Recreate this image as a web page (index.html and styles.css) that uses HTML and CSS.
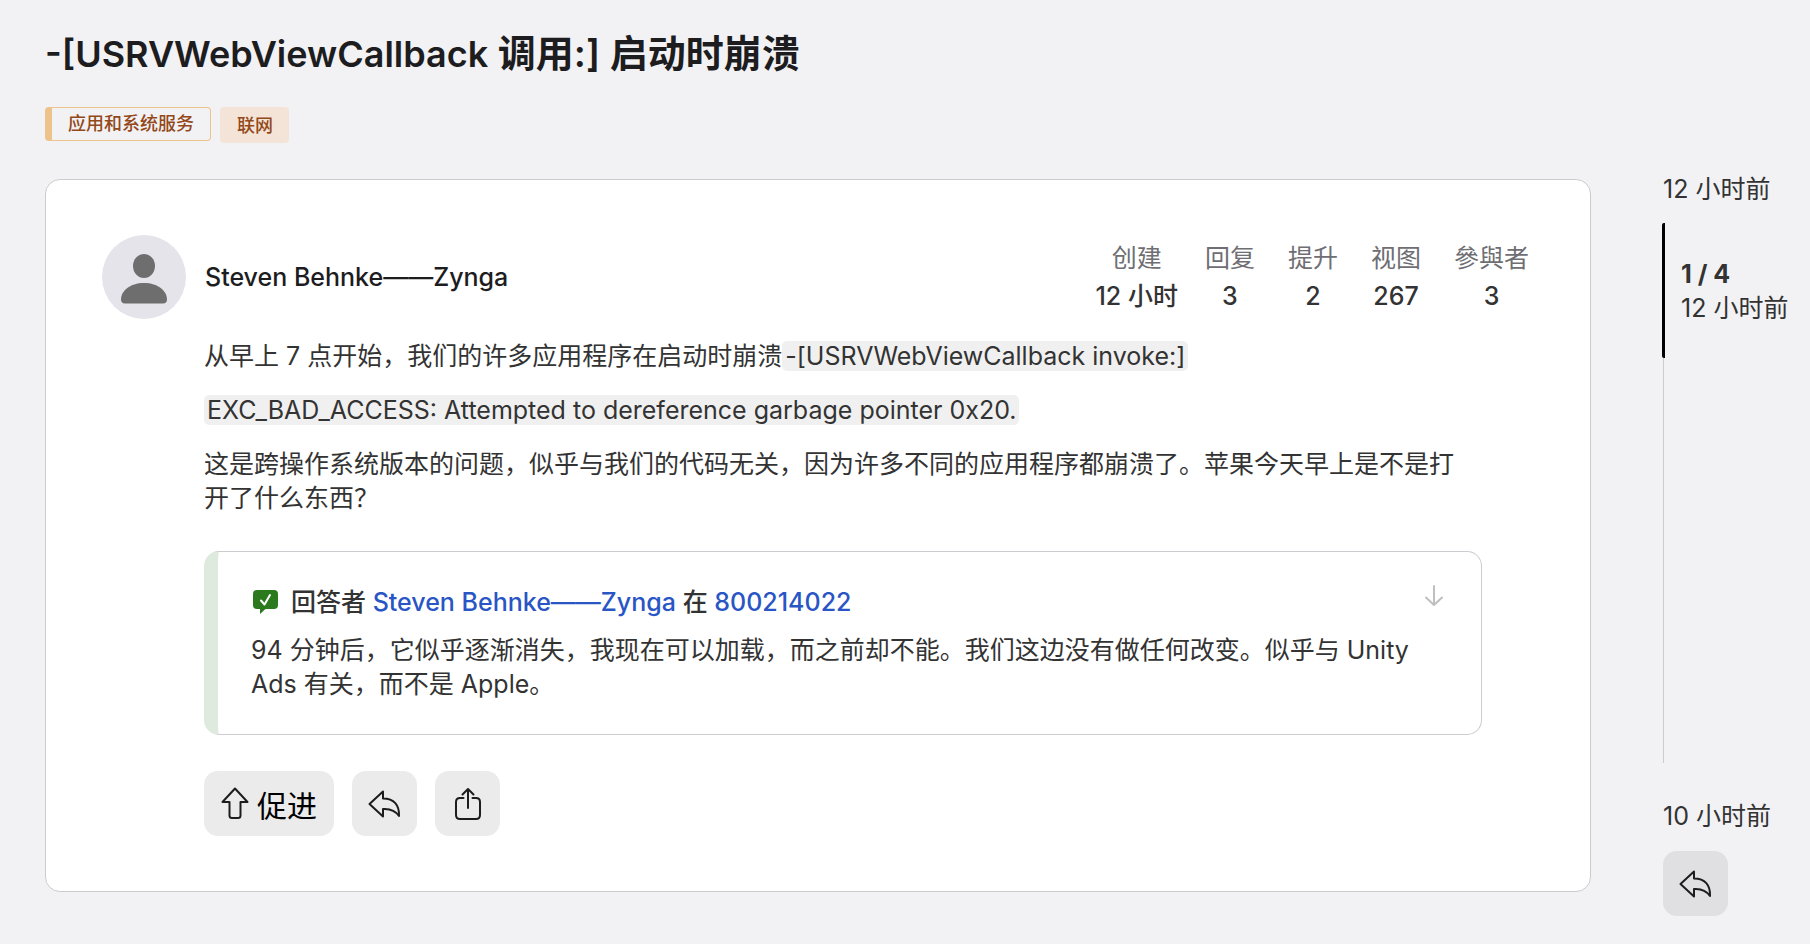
FILE: index.html
```html
<!DOCTYPE html>
<html lang="zh-CN">
<head>
    <meta charset="UTF-8">
    <meta name="viewport" content="width=device-width, initial-scale=1.0">
    <title>-[USRVWebViewCallback 调用:] 启动时崩溃</title>
    <link rel="stylesheet" href="styles.css">
</head>
<body>
    <header class="header">
        <h1 class="title"><span class="title-symbol">-[USRVWebViewCallback</span> 调用:] 启动时崩溃</h1>
        <div class="tags">
            <a href="#" class="tag tag-topic">应用和系统服务</a>
            <a href="#" class="tag tag-sub">联网</a>
        </div>
    </header>

    <div class="container">
        <main class="post">
            <div class="post-header">
                <svg class="avatar" viewBox="0 0 84 84" aria-hidden="true">
                    <circle cx="42" cy="42" r="42" fill="#e5e4ea"/>
                    <ellipse cx="42" cy="31" rx="11" ry="12" fill="#6e6e6e"/>
                    <path d="M23 68.500C20.500 68.500 19 67 19 64.500C19 56 28 48 42 48S65 56 65 64.500C65 67 63.500 68.500 61 68.500Z" fill="#6e6e6e"/>
                </svg>
                <span class="author">Steven Behnke——Zynga</span>
                <dl class="stats">
                    <div class="stat"><dt>创建</dt><dd>12 小时</dd></div>
                    <div class="stat"><dt>回复</dt><dd>3</dd></div>
                    <div class="stat"><dt>提升</dt><dd>2</dd></div>
                    <div class="stat"><dt>视图</dt><dd>267</dd></div>
                    <div class="stat"><dt>參與者</dt><dd>3</dd></div>
                </dl>
            </div>

            <div class="post-body">
                <p>从早上 7 点开始，我们的许多应用程序在启动时崩溃<code>-[USRVWebViewCallback invoke:]</code></p>
                <p><code>EXC_BAD_ACCESS: Attempted to dereference garbage pointer 0x20.</code></p>
                <p>这是跨操作系统版本的问题，似乎与我们的代码无关，因为许多不同的应用程序都崩溃了。苹果今天早上是不是打开了什么东西？</p>

                <section class="answer">
                    <div class="answer-header">
                        <svg class="answer-icon" viewBox="0 0 26 26" aria-hidden="true">
                            <path d="M4 1H21Q25 1 25 5V16Q25 20 21 20H12.500L7 25V20H4Q0 20 0 16V5Q0 1 4 1Z" fill="#2b7a1e"/>
                            <path d="M8 11.500L11.500 15.500L17 6" fill="none" stroke="#fff" stroke-width="2" stroke-linecap="round" stroke-linejoin="round"/>
                        </svg>
                        <span class="answer-by">回答者 <a href="#">Steven Behnke——Zynga</a> 在 <a href="#">800214022</a></span>
                        <a href="#" class="jump" aria-label="跳到回答">
                            <svg width="20" height="24" viewBox="0 0 20 24" fill="none" stroke="#bfbfbf" stroke-width="2" stroke-linecap="round" stroke-linejoin="round">
                                <path d="M10 1V20M2 12.500L10 20L18 12.500"/>
                            </svg>
                        </a>
                    </div>
                    <p class="answer-text">94 分钟后，它似乎逐渐消失，我现在可以加载，而之前却不能。我们这边没有做任何改变。似乎与 Unity Ads 有关，而不是 Apple。</p>
                </section>

                <div class="actions">
                    <button class="btn btn-boost">
                        <svg width="28" height="33" viewBox="0 0 28 33" fill="none" stroke="#1d1d1f" stroke-width="2" stroke-linejoin="round">
                            <path d="M14 1.500L26.500 15H19.500V28.500Q19.500 31 17 31H11Q8.500 31 8.500 28.500V15H1.500Z"/>
                        </svg>
                        促进
                    </button>
                    <button class="btn" aria-label="回复">
                        <svg width="33" height="28" viewBox="0 0 33 28" fill="none" stroke="#1d1d1f" stroke-width="2" stroke-linejoin="round">
                            <path d="M15 1.500L1.500 14L15 26.500V19C22 18.500 27 20 31 26C31.500 15 26 8.500 15 8.500Z"/>
                        </svg>
                    </button>
                    <button class="btn" aria-label="分享">
                        <svg width="28" height="34" viewBox="0 0 28 34" fill="none" stroke="#1d1d1f" stroke-width="2" stroke-linecap="round" stroke-linejoin="round">
                            <path d="M9.500 11H6Q2 11 2 15V28Q2 32 6 32H22Q26 32 26 28V15Q26 11 22 11H18.500M14 21V2M8.500 7.500L14 2L19.500 7.500"/>
                        </svg>
                    </button>
                </div>
            </div>
        </main>

        <aside class="timeline">
            <span>12 小时前</span>
            <div class="track">
                <div class="thumb">
                    <strong>1 / 4</strong>
                    <span>12 小时前</span>
                </div>
            </div>
            <span>10 小时前</span>
            <button class="btn btn-reply" aria-label="回复">
                <svg width="33" height="28" viewBox="0 0 33 28" fill="none" stroke="#1d1d1f" stroke-width="2" stroke-linejoin="round">
                    <path d="M15 1.500L1.500 14L15 26.500V19C22 18.500 27 20 31 26C31.500 15 26 8.500 15 8.500Z"/>
                </svg>
            </button>
        </aside>
    </div>
</body>
</html>
```
FILE: styles.css
```css
/* General Styles */
* {
    box-sizing: border-box;
}

body {
    font-family: Inter, "Noto Sans CJK SC", sans-serif;
    font-size: 25px;
    line-height: 34px;
    color: #333333;
    background-color: #f2f2f5;
    margin: 0;
    padding: 29px 0 28px 45px;
}

a {
    color: #2955c5;
    text-decoration: none;
}

p {
    margin: 0 0 20px;
}

/* Title and tags */
.title {
    font-size: 38px;
    line-height: 48px;
    font-weight: 600;
    color: #1d1d1f;
    margin: 0 0 29px;
}

.title-symbol {
    font-size: 36px;
}

.tags {
    display: flex;
    align-items: flex-start;
    gap: 9px;
    margin-bottom: 36px;
}

.tag {
    font-size: 18px;
    line-height: 32px;
    font-weight: 500;
    color: #934819;
    border-radius: 4px;
}

.tag-topic {
    padding: 0 16px;
    border: 1px solid #eec28b;
    border-left-width: 7px;
}

.tag-sub {
    padding: 3px 16px 1px 17px;
    background-color: #f3e4d7;
}

/* Layout */
.container {
    display: flex;
    align-items: flex-start;
    gap: 72px;
}

.post {
    flex: 1;
    background-color: #ffffff;
    border: 1px solid #cbcbd0;
    border-radius: 15px;
    padding: 55px 55px 55px 56px;
}

.post-header {
    display: flex;
    align-items: center;
    margin-bottom: 20px;
}

.avatar {
    width: 84px;
    height: 84px;
    margin-right: 19px;
}

.author {
    font-weight: 500;
    color: #1d1d1f;
}

/* Stats */
.stats {
    display: flex;
    gap: 21px;
    margin: 0 0 0 auto;
    text-align: center;
    font-weight: 500;
}

.stat dt {
    padding: 0 6px;
    margin-bottom: 4px;
    font-weight: 400;
    color: #6e6e73;
}

.stat dd {
    margin: 0;
}

/* Post body */
.post-body {
    padding: 0 53px 0 102px;
}

.post-body > p {
    padding-right: 12px;
}

code {
    font-family: inherit;
    background-color: #f0f0f0;
    border-radius: 5px;
    padding: 0 3px;
}

/* Accepted answer */
.answer {
    border: 1px solid #cbcbd0;
    border-left: 14px solid #dfeade;
    border-radius: 15px;
    padding: 33px;
    margin: 36px 0;
}

.answer-header {
    display: flex;
    align-items: center;
    margin-bottom: 14px;
    font-weight: 500;
}

.answer-icon {
    width: 26px;
    height: 26px;
    margin: 0 12px 0 2px;
}

.jump {
    display: flex;
    margin: 0 4px 10px auto;
}

.answer-text {
    margin: 0;
}

/* Buttons */
.actions {
    display: flex;
    gap: 18px;
}

.btn {
    display: flex;
    align-items: center;
    justify-content: center;
    gap: 8px;
    width: 65px;
    height: 65px;
    padding: 0;
    border: none;
    border-radius: 14px;
    background-color: #ebebeb;
    color: #000000;
    font-family: inherit;
    font-size: 30px;
    cursor: pointer;
}

.btn:hover {
    background-color: #dddddd;
}

.btn-boost {
    width: auto;
    padding: 0 17px;
}

.btn-reply {
    background-color: #e0e0e2;
    margin-top: 18px;
}

/* Timeline */
.timeline {
    display: flex;
    flex-direction: column;
    width: 147px;
    margin-top: -7px;
}

.track {
    height: 540px;
    border-left: 1px solid #cbcbd0;
    margin: 17px 0 36px;
}

.thumb {
    display: flex;
    flex-direction: column;
    justify-content: center;
    height: 135px;
    margin-left: -2px;
    padding-left: 16px;
    border-left: 3px solid #000000;
    border-radius: 2px;
}
```
